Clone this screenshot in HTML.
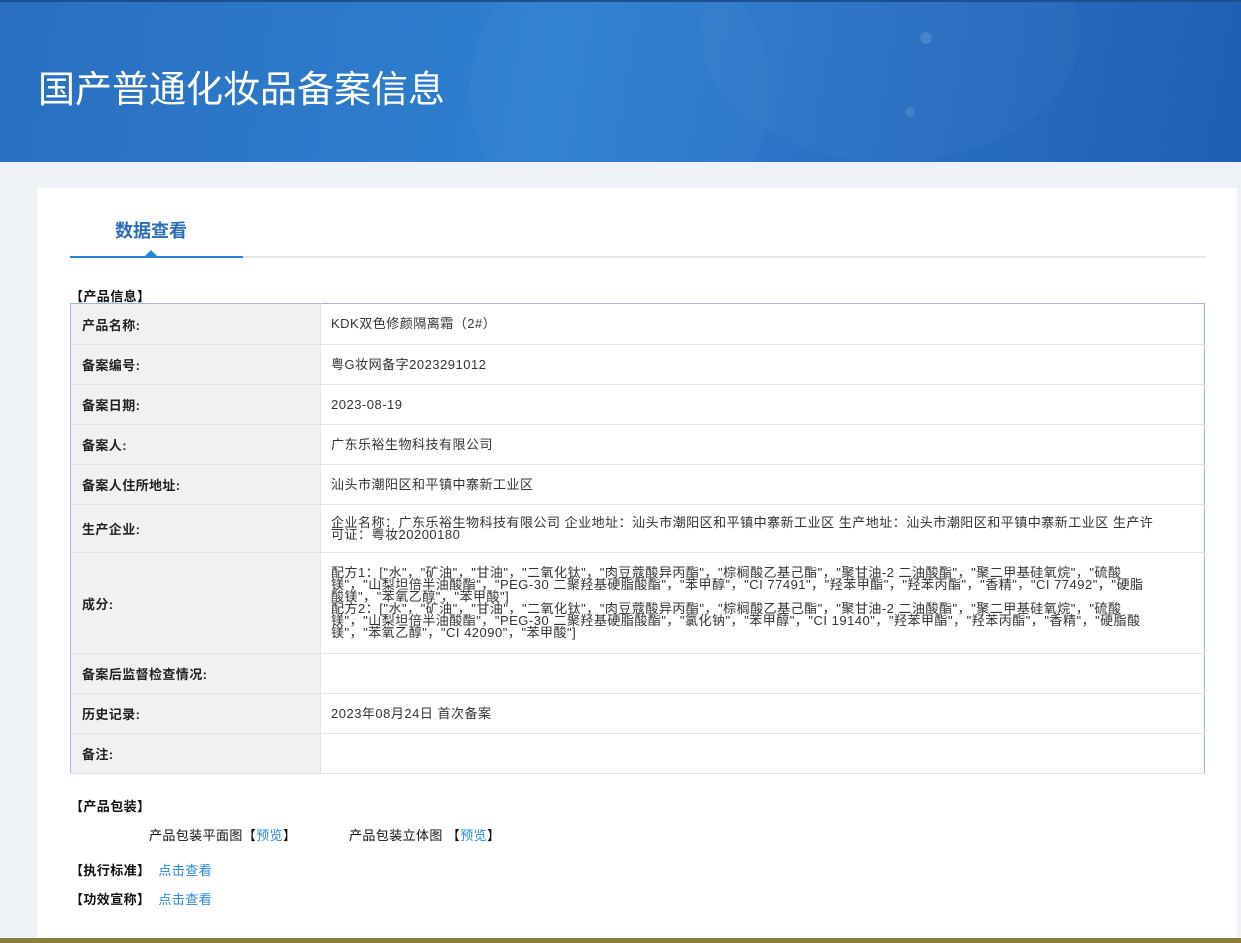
<!DOCTYPE html>
<html><head><meta charset="utf-8"><style>
*{margin:0;padding:0;box-sizing:border-box}
body{width:1241px;height:943px;overflow:hidden;background:#eef2f6;font-family:"Liberation Sans","Noto Sans CJK SC",sans-serif;position:relative}
.hdr{position:absolute;left:0;top:0;width:1241px;height:162px;background:linear-gradient(100deg,#2a6fc0 0%,#2f7fd0 45%,#2a70c4 70%,#1f5fb2 100%);overflow:hidden;border-top:2px solid #1d4f8f}
.hdr h1{position:absolute;left:38px;top:66px;font-size:37px;font-weight:normal;color:#fff;line-height:44px}
.c{position:absolute;border-radius:50%;background:rgba(255,255,255,.025)}
.card{position:absolute;left:37px;top:188px;width:1200px;height:750px;background:#fff}
.tab{position:absolute;left:115px;top:217px;font-size:18px;font-weight:bold;color:#2a6cb5}
.line{position:absolute;left:70px;top:256px;width:1135px;height:2px;background:#e6e6e6}
.line2{position:absolute;left:70px;top:256px;width:173px;height:2px;background:#2a88d8}
.tri{position:absolute;left:145px;top:250px;width:0;height:0;border-left:6px solid transparent;border-right:6px solid transparent;border-bottom:6px solid #2a88d8}
.sec{position:absolute;font-size:13px;font-weight:bold;color:#111;letter-spacing:0.4px}
table{position:absolute;left:70px;top:303px;width:1135px;border-collapse:collapse;border:1px solid #9db8e0;font-size:13px}
td{border-bottom:1px solid #e3e3e3;color:#333;vertical-align:middle}
td.l{width:250px;background:#f1f1f1;font-weight:bold;padding-left:11px;color:#222;border-right:1px solid #e3e3e3;letter-spacing:0.4px}
td.v{padding-left:10px;padding-right:50px;line-height:12px;letter-spacing:0.5px}
a{color:#2a88d8;text-decoration:none}
.t{position:absolute;font-size:13px;color:#111;letter-spacing:0.4px}
.bot{position:absolute;left:0;top:938px;width:1241px;height:5px;background:#8a7d3e}
</style></head><body>
<div class="hdr">
<div class="c" style="left:470px;top:-60px;width:300px;height:300px"></div>
<div class="c" style="left:700px;top:-100px;width:380px;height:260px"></div>
<div class="c" style="left:920px;top:30px;width:12px;height:12px;background:rgba(255,255,255,.12)"></div>
<div class="c" style="left:905px;top:105px;width:10px;height:10px;background:rgba(255,255,255,.1)"></div>
<h1>国产普通化妆品备案信息</h1>
</div>
<div class="card"></div>
<div class="tab">数据查看</div>
<div class="line"></div><div class="line2"></div><div class="tri"></div>
<div class="sec" style="left:70px;top:286px">【产品信息】</div>
<table>
<tr style="height:41px"><td class="l">产品名称:</td><td class="v">KDK双色修颜隔离霜（2#）</td></tr>
<tr style="height:40px"><td class="l">备案编号:</td><td class="v">粤G妆网备字2023291012</td></tr>
<tr style="height:40px"><td class="l">备案日期:</td><td class="v">2023-08-19</td></tr>
<tr style="height:40px"><td class="l">备案人:</td><td class="v">广东乐裕生物科技有限公司</td></tr>
<tr style="height:40px"><td class="l">备案人住所地址:</td><td class="v">汕头市潮阳区和平镇中寨新工业区</td></tr>
<tr style="height:48px"><td class="l">生产企业:</td><td class="v">企业名称：广东乐裕生物科技有限公司 企业地址：汕头市潮阳区和平镇中寨新工业区 生产地址：汕头市潮阳区和平镇中寨新工业区 生产许可证：粤妆20200180</td></tr>
<tr style="height:101px"><td class="l">成分:</td><td class="v">配方1：["水"，"矿油"，"甘油"，"二氧化钛"，"肉豆蔻酸异丙酯"，"棕榈酸乙基己酯"，"聚甘油-2 二油酸酯"，"聚二甲基硅氧烷"，"硫酸镁"，"山梨坦倍半油酸酯"，"PEG-30 二聚羟基硬脂酸酯"，"苯甲醇"，"CI 77491"，"羟苯甲酯"，"羟苯丙酯"，"香精"，"CI 77492"，"硬脂酸镁"，"苯氧乙醇"，"苯甲酸"]<br>配方2：["水"，"矿油"，"甘油"，"二氧化钛"，"肉豆蔻酸异丙酯"，"棕榈酸乙基己酯"，"聚甘油-2 二油酸酯"，"聚二甲基硅氧烷"，"硫酸镁"，"山梨坦倍半油酸酯"，"PEG-30 二聚羟基硬脂酸酯"，"氯化钠"，"苯甲醇"，"CI 19140"，"羟苯甲酯"，"羟苯丙酯"，"香精"，"硬脂酸镁"，"苯氧乙醇"，"CI 42090"，"苯甲酸"]</td></tr>
<tr style="height:40px"><td class="l">备案后监督检查情况:</td><td class="v"></td></tr>
<tr style="height:40px"><td class="l">历史记录:</td><td class="v">2023年08月24日 首次备案</td></tr>
<tr style="height:40px"><td class="l">备注:</td><td class="v"></td></tr>
</table>
<div class="sec" style="left:70px;top:796px">【产品包装】</div>
<div class="t" style="left:149px;top:825px">产品包装平面图【<a>预览</a>】</div>
<div class="t" style="left:349px;top:825px">产品包装立体图 【<a>预览</a>】</div>
<div class="sec" style="left:70px;top:860px">【执行标准】 <a style="font-weight:normal;margin-left:4px">点击查看</a></div>
<div class="sec" style="left:70px;top:889px">【功效宣称】 <a style="font-weight:normal;margin-left:4px">点击查看</a></div>
<div class="bot"></div>
</body></html>
